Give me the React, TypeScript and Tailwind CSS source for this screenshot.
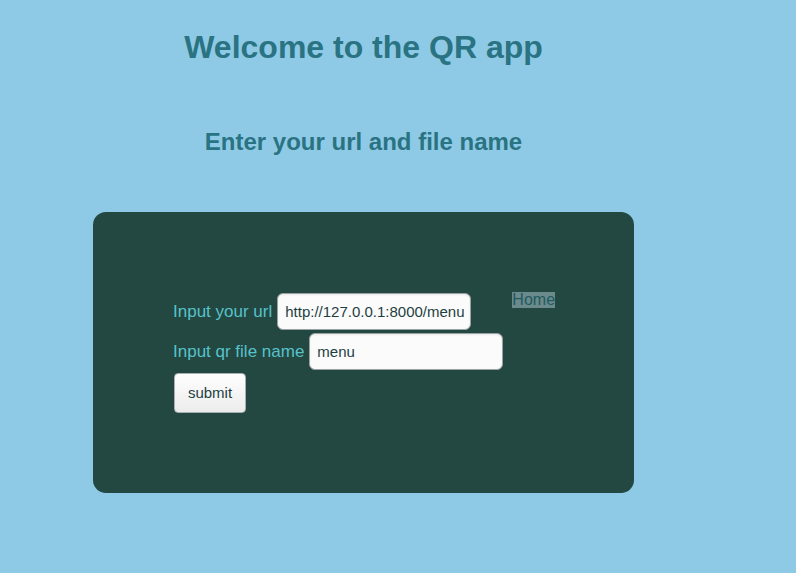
import * as React from "react"

const font = { fontFamily: '"Liberation Sans", Arial, sans-serif' }

function Field({ label, value }: { label: string; value: string }) {
  return (
    <div className="flex items-center h-[37px]">
      <label className="text-[17px] text-[#57c2ca] mr-[5px]">{label}</label>
      <input
        defaultValue={value}
        className="w-[194px] h-[37px] rounded-[6px] border border-[#9aa3a3] bg-[#fbfbfb] pl-[7px] pr-[2px] text-[15px] text-[#1e3f3f] outline-none shadow-[inset_0_1px_2px_rgba(0,0,0,0.08)]"
      />
    </div>
  )
}

export default function App() {
  return (
    <div className="min-h-[573px] w-full bg-[#8ecae6]" style={font}>
      <div className="w-[541px] ml-[93px] pt-[29px] pb-[80px]">
        <h1 className="text-center text-[32px] leading-[37px] font-bold text-[#2a7382]">
          Welcome to the QR app
        </h1>
        <h2 className="mt-[62px] text-center text-[24px] leading-[28px] font-bold text-[#2a7382]">
          Enter your url and file name
        </h2>
        <div className="mt-[56px] h-[281px] rounded-[13px] bg-[#234741] pl-[80px] pt-[80px] flex items-start">
          <form className="flex flex-col gap-[3px]" onSubmit={(e) => e.preventDefault()}>
            <div className="pt-[1px]">
              <Field label="Input your url" value="http://127.0.0.1:8000/menu" />
            </div>
            <Field label="Input qr file name" value="menu" />
            <div className="pl-[1px]">
              <button
                type="submit"
                className="w-[72px] h-[40px] rounded-[4px] border border-[#a9b0b0] bg-gradient-to-b from-white to-[#ececec] text-[15px] text-[#22403f]"
              >
                submit
              </button>
            </div>
          </form>
          <a href="#" className="block ml-[9px] bg-[#6b8a8c] text-[#1f5a5f] text-[16px] leading-[16px]">
            Home
          </a>
        </div>
      </div>
    </div>
  )
}
